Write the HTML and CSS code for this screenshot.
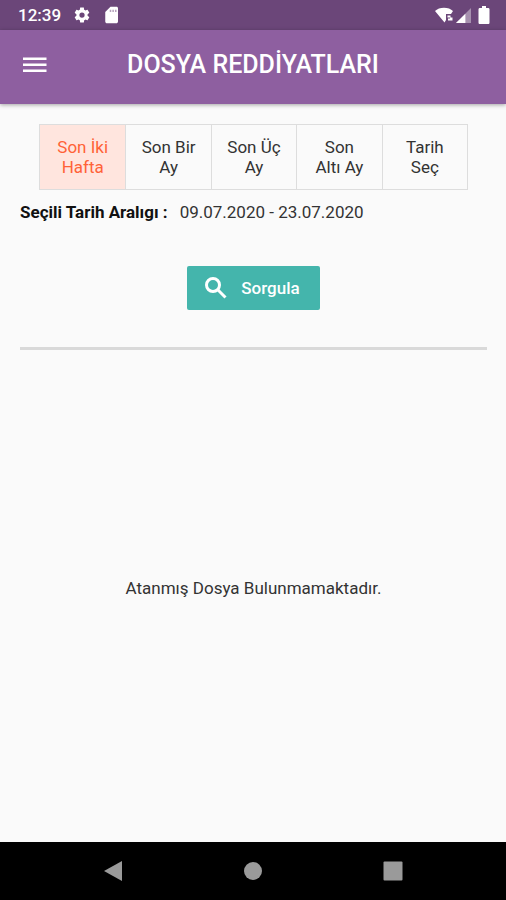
FILE: index.html
```html
<!DOCTYPE html>
<html lang="tr">

<head>
    <meta charset="UTF-8">
    <meta name="viewport" content="width=device-width, initial-scale=1.0">
    <title>Dosya Reddiyatları</title>
    <link rel="stylesheet" href="styles.css">
</head>

<body>
    <div class="status-bar">
        <span class="clock">12:39</span>
        <svg class="status-icon" viewBox="0 0 24 24" aria-hidden="true">
            <path d="M19.4 13c0-.3.1-.6.1-1s0-.7-.1-1l2.1-1.7c.2-.1.2-.4.1-.6l-2-3.5c-.1-.2-.4-.3-.6-.2l-2.500 1c-.5-.4-1.100-.7-1.700-1L14.500 2.400c0-.2-.2-.4-.5-.4h-4c-.2 0-.5.2-.5.400L9.100 5c-.6.3-1.200.6-1.700 1L5 5c-.2-.1-.5 0-.6.2l-2 3.500c-.1.2-.1.500.1.600L4.600 11c0 .3-.1.700-.1 1s0 .7.1 1l-2.100 1.700c-.2.100-.2.400-.1.600l2 3.500c.1.200.4.300.6.200l2.400-1c.5.400 1.100.7 1.700 1l.4 2.600c0 .2.200.4.5.4h4c.2 0 .5-.2.500-.4l.4-2.600c.6-.3 1.200-.6 1.700-1l2.400 1c.2.100.5 0 .6-.2l2-3.500c.1-.2.100-.5-.1-.6zM12 15.500a3.500 3.500 0 1 1 0-7 3.500 3.500 0 0 1 0 7z" />
        </svg>
        <svg class="status-icon" viewBox="0 0 24 24" aria-hidden="true">
            <path d="M18 1h-8L3 8v12.500C3 21.900 4.100 23 5.500 23h12c1.400 0 2.500-1.100 2.500-2.500V3c0-1.100-.9-2-2-2z" />
            <path d="M9 5h2v3H9zM12.500 5h2v3h-2zM16 5h2v3h-2z" fill="#6b4679" opacity=".5" />
        </svg>
        <div class="status-right">
            <svg class="wifi-icon" viewBox="0 0 18 16" aria-hidden="true">
                <path d="M0 4C4-.5 14-.5 18 4l-2 3h-5v6l-1.500 2.500z" />
                <path d="M12.500 8.500h3v2h-3zM15 10.500h2.500v3H13v-2h2z" />
            </svg>
            <svg class="signal-icon" viewBox="0 0 16 16" aria-hidden="true">
                <path d="M16 0v16H0z" opacity=".4" />
                <path d="M10 6v10H0z" />
            </svg>
            <svg class="battery-icon" viewBox="0 0 12 18" aria-hidden="true">
                <path d="M4 0h4v2h2c1 0 1.500.5 1.500 1.500v13c0 1-.5 1.500-1.500 1.500H2C1 18 .5 17.500.5 16.500v-13C.5 2.500 1 2 2 2h2z" />
            </svg>
        </div>
    </div>

    <header class="app-bar">
        <button type="button" class="menu-button" aria-label="Menü">
            <svg viewBox="0 0 24 16" aria-hidden="true">
                <path d="M0 .5h23.500V3H0zM0 6.500h23.500V9H0zM0 12.500h23.500V15H0z" />
            </svg>
        </button>
        <h1>DOSYA REDDİYATLARI</h1>
    </header>

    <main class="content">
        <div class="range-tabs" role="group" aria-label="Tarih aralığı">
            <button type="button" class="range-tab active" aria-pressed="true">Son İki Hafta</button>
            <button type="button" class="range-tab" aria-pressed="false">Son Bir Ay</button>
            <button type="button" class="range-tab" aria-pressed="false">Son Üç Ay</button>
            <button type="button" class="range-tab" aria-pressed="false">Son Altı&nbsp;Ay</button>
            <button type="button" class="range-tab" aria-pressed="false">Tarih Seç</button>
        </div>

        <p class="selected-range"><strong>Seçili Tarih Aralıgı :</strong><span>09.07.2020 - 23.07.2020</span></p>

        <button type="button" class="query-button">
            <svg viewBox="0 0 22 22" aria-hidden="true">
                <circle cx="8" cy="8" r="6.500" />
                <path d="M12.800 12.800L20.500 20.500" />
            </svg>
            <span>Sorgula</span>
        </button>

        <hr class="divider">

        <p class="empty-message">Atanmış Dosya Bulunmamaktadır.</p>
    </main>

    <nav class="system-nav">
        <button type="button" class="nav-button" aria-label="Geri">
            <svg viewBox="0 0 20 22" aria-hidden="true">
                <path d="M19 1v20L1 11z" />
            </svg>
        </button>
        <button type="button" class="nav-button" aria-label="Ana ekran">
            <svg viewBox="0 0 20 22" aria-hidden="true">
                <circle cx="10" cy="11" r="9" />
            </svg>
        </button>
        <button type="button" class="nav-button" aria-label="Son uygulamalar">
            <svg viewBox="0 0 20 22" aria-hidden="true">
                <rect x="0.500" y="1.500" width="19" height="19" rx="1" />
            </svg>
        </button>
    </nav>

    <script>
        const tabs = document.querySelectorAll('.range-tab');

        tabs.forEach((tab) => {
            tab.addEventListener('click', () => {
                tabs.forEach((other) => {
                    other.classList.toggle('active', other === tab);
                    other.setAttribute('aria-pressed', other === tab);
                });
            });
        });
    </script>
</body>

</html>
```

FILE: styles.css
```css
* {
    box-sizing: border-box;
}

body {
    display: flex;
    flex-direction: column;
    min-height: 100vh;
    margin: 0;
    background-color: #fafafa;
    color: #333333;
    font-family: Roboto, "Liberation Sans", sans-serif;
    font-size: 17px;
    line-height: 20px;
}

button {
    padding: 0;
    border: none;
    background: none;
    color: inherit;
    font: inherit;
    cursor: pointer;
}

svg {
    display: block;
}

/* status bar */
.status-bar {
    display: flex;
    align-items: center;
    gap: 12px;
    height: 30px;
    padding: 0 16px 0 18px;
    background-color: #6b4679;
    color: #ffffff;
    fill: #ffffff;
}

.clock {
    font-weight: 500;
}

.status-icon {
    width: 18px;
    height: 18px;
}

.status-right {
    display: flex;
    align-items: center;
    gap: 3px;
    margin-left: auto;
}

.wifi-icon {
    width: 18px;
    height: 16px;
}

.signal-icon {
    width: 15px;
    height: 15px;
}

.battery-icon {
    width: 12px;
    height: 18px;
    margin-left: 4px;
}

/* app bar */
.app-bar {
    display: grid;
    grid-template-columns: 24px 1fr 24px;
    align-items: center;
    height: 74px;
    padding: 0 23px 4px;
    background-color: #8e5fa0;
    color: #ffffff;
    box-shadow: 0 1px 4px rgba(0, 0, 0, 0.35);
}

.menu-button svg {
    width: 24px;
    height: 16px;
    fill: #ffffff;
}

h1 {
    margin: 0;
    font-size: 25px;
    font-weight: 500;
    line-height: 32px;
    text-align: center;
}

/* content */
.content {
    display: flex;
    flex: 1;
    flex-direction: column;
    padding: 20px 19px 16px 20px;
}

.range-tabs {
    display: grid;
    grid-template-columns: repeat(5, 1fr);
    margin: 0 19px;
    border: 1px solid #dddddd;
}

.range-tab {
    min-height: 64px;
    padding: 0 12px;
    border-left: 1px solid #dddddd;
}

.range-tab:first-child {
    border-left: none;
}

.range-tab.active {
    background-color: #ffe5de;
    color: #ff6237;
}

.selected-range {
    display: flex;
    gap: 12px;
    margin: 12px 0 0;
}

.selected-range strong {
    color: #111111;
    font-weight: 700;
}

.query-button {
    display: flex;
    align-items: center;
    align-self: center;
    gap: 14px;
    height: 44px;
    margin-top: 44px;
    padding: 0 20px 0 18px;
    border-radius: 2px;
    background-color: #44b5ac;
    color: #ffffff;
    font-weight: 500;
}

.query-button svg {
    width: 22px;
    height: 22px;
    fill: none;
    stroke: #ffffff;
    stroke-width: 3;
}

.divider {
    width: 100%;
    height: 3px;
    margin: 37px 0 0;
    border: none;
    background-color: #d9d9d9;
}

.empty-message {
    display: flex;
    flex: 1;
    align-items: center;
    justify-content: center;
    margin: 0;
    text-align: center;
}

/* android navigation */
.system-nav {
    display: flex;
    align-items: center;
    justify-content: center;
    gap: 92px;
    height: 58px;
    background-color: #000000;
}

.nav-button {
    display: flex;
    align-items: center;
    justify-content: center;
    width: 48px;
    height: 48px;
}

.nav-button svg {
    width: 20px;
    height: 22px;
    fill: #9a9a9a;
}
```
